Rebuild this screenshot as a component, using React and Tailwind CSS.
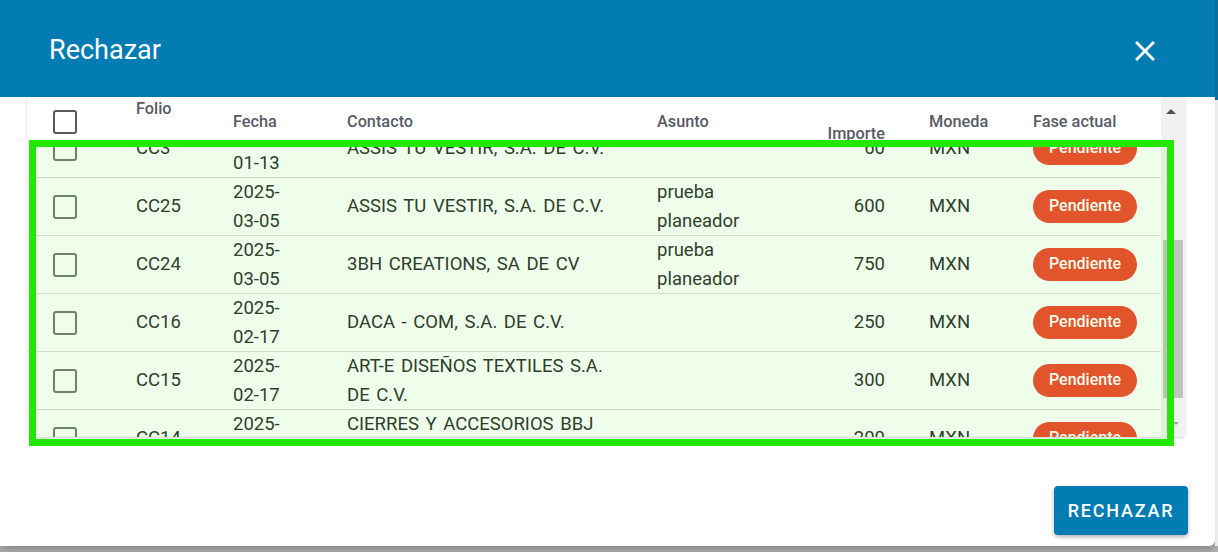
import React from "react";

const rows = [
  { folio: "CC3", fecha: "2025-01-13", contacto: "ASSIS TU VESTIR, S.A. DE C.V.", asunto: "", importe: "60" },
  { folio: "CC25", fecha: "2025-03-05", contacto: "ASSIS TU VESTIR, S.A. DE C.V.", asunto: "prueba planeador", importe: "600" },
  { folio: "CC24", fecha: "2025-03-05", contacto: "3BH CREATIONS, SA DE CV", asunto: "prueba planeador", importe: "750" },
  { folio: "CC16", fecha: "2025-02-17", contacto: "DACA - COM, S.A. DE C.V.", asunto: "", importe: "250" },
  { folio: "CC15", fecha: "2025-02-17", contacto: "ART-E DISEÑOS TEXTILES S.A. DE C.V.", asunto: "", importe: "300" },
  { folio: "CC14", fecha: "2025-02-10", contacto: "CIERRES Y ACCESORIOS BBJ S.A. DE C.V.", asunto: "", importe: "200" },
];

const cols = "grid grid-cols-[109px_97px_114px_310px_160px_112px_104px_128px]";

function Checkbox({ dark }) {
  return (
    <div
      className={`w-6 h-6 rounded-[3px] border-[2.5px] ${
        dark ? "border-[#5a5a5a]" : "border-[#737873]"
      }`}
    />
  );
}

function CloseIcon() {
  return (
    <svg width="34" height="34" viewBox="0 0 24 24" fill="white">
      <path d="M19 6.41 17.59 5 12 10.59 6.41 5 5 6.41 10.59 12 5 17.59 6.41 19 12 13.41 17.59 19 19 17.59 13.41 12z" />
    </svg>
  );
}

export default function App() {
  return (
    <div
      className="relative w-[1218px] h-[552px] bg-[#b3b3b3] flex overflow-hidden"
      style={{ fontFamily: "Roboto, 'Liberation Sans', sans-serif" }}
    >
      <div className="w-[1215px] h-[546px] bg-white rounded-br-[6px] shadow-[0_4px_8px_rgba(0,0,0,0.25)] flex flex-col">
        {/* title bar */}
        <div className="h-[97px] bg-[#037bb3] flex items-center justify-between pl-[49px] pr-[53px] pt-[5px]">
          <div className="text-white text-[27px] leading-none pb-[2px]">Rechazar</div>
          <CloseIcon />
        </div>

        {/* table */}
        <div className="ml-[27px] w-[1158px] h-[340px] flex rounded-b-[4px] shadow-[0_1px_3px_rgba(0,0,0,0.18)] overflow-hidden">
          <div className="w-[1134px] flex flex-col">
            <div className={`${cols} h-[45px] bg-white text-[16.3px] leading-5 font-medium text-[#575b66]`}>
              <div className="pl-[26px] self-center pt-[5px]">
                <Checkbox dark />
              </div>
              <div className="self-start pt-[2px]">Folio</div>
              <div className="self-center pt-[4px]">Fecha</div>
              <div className="self-center pt-[4px]">Contacto</div>
              <div className="self-center pt-[4px]">Asunto</div>
              <div className="self-end text-right pr-[44px] -mb-[2px]">Importe</div>
              <div className="self-center pt-[4px]">Moneda</div>
              <div className="self-center pt-[4px]">Fase actual</div>
            </div>
            <div className="flex-1 overflow-hidden bg-white">
              <div className="-mt-[22px]">
                {rows.map((r) => (
                  <div
                    key={r.folio}
                    className={`${cols} h-[58px] items-center border-b border-[#dcdcdc] text-[18.5px] leading-[28.8px] [word-spacing:2px] text-[#303030]`}
                  >
                    <div className="pl-[26px]">
                      <Checkbox />
                    </div>
                    <div>{r.folio}</div>
                    <div className="w-[55px] break-words">{r.fecha}</div>
                    <div className="w-[275px]">{r.contacto}</div>
                    <div className="w-[100px]">{r.asunto}</div>
                    <div className="text-right pr-[44px]">{r.importe}</div>
                    <div>MXN</div>
                    <div className="[word-spacing:0px]">
                      <span className="inline-flex items-center h-[33px] px-[16px] rounded-full bg-[#f2462f] text-white text-[16px] font-medium">
                        Pendiente
                      </span>
                    </div>
                  </div>
                ))}
              </div>
            </div>
          </div>

          {/* scrollbar */}
          <div className="w-[24px] bg-[#f1f1f1] flex flex-col">
            <div className="h-[28px] flex items-center justify-center pr-[4px]">
              <div className="w-0 h-0 border-x-[5px] border-x-transparent border-b-[5px] border-b-[#505050]" />
            </div>
            <div className="flex-1 px-[2px]">
              <div className="mt-[115px] h-[158px] bg-[#c1c1c1]" />
            </div>
            <div className="h-[28px] flex items-center justify-end pr-[6px]">
              <div className="w-0 h-0 border-x-[3px] border-x-transparent border-t-[3px] border-t-[#a0a0a0]" />
            </div>
          </div>
        </div>

        <div className="flex-1 flex items-end justify-end pr-[27px] pb-[11px]">
          <button className="h-[49px] w-[134px] rounded-[4px] bg-[#037bb3] text-white text-[18px] font-medium tracking-[1.8px] shadow-[0_2px_4px_rgba(0,0,0,0.3)]">
            RECHAZAR
          </button>
        </div>
      </div>

      {/* page behind the dialog */}
      <div className="flex-1 h-[546px] flex flex-col">
        <div className="h-[100px] bg-[#0b6d9c]" />
        <div className="flex-1 bg-[#ececec]" />
      </div>

      {/* highlighted rows */}
      <div className="absolute left-[29px] top-[140px] w-[1145px] h-[306px] border-[7px] border-[#22e800] bg-[#22e800]/[0.08] pointer-events-none" />
    </div>
  );
}
